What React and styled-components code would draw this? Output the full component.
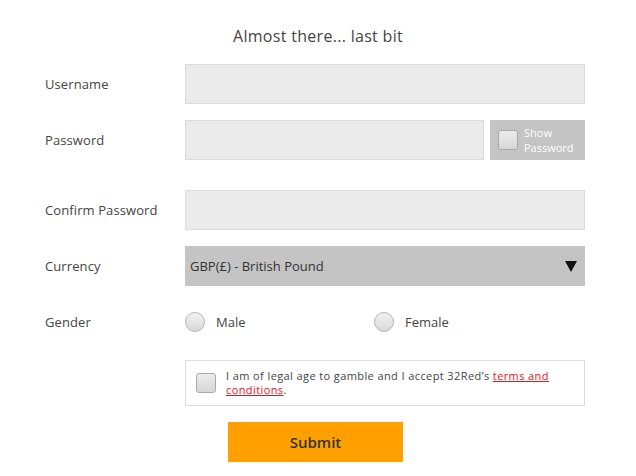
import React from "react";
import styled, { createGlobalStyle } from "styled-components";

const fields = [
  { label: "Username", type: "text", space: 16 },
  { label: "Password", type: "password", space: 30, toggle: true },
  { label: "Confirm Password", type: "password", space: 16 },
];

export default function App() {
  return (
    <Page>
      <GlobalStyle />
      <Title>Almost there... last bit</Title>
      <Form>
        {fields.map((f) => (
          <Row key={f.label} $space={f.space}>
            <Label>{f.label}</Label>
            <Field>
              <TextInput type={f.type} />
              {f.toggle && (
                <ShowToggle>
                  <Box />
                  <ToggleText>Show<br />Password</ToggleText>
                </ShowToggle>
              )}
            </Field>
          </Row>
        ))}
        <Row $space={16}>
          <Label>Currency</Label>
          <Select>
            <span>GBP(£) - British Pound</span>
            <Caret />
          </Select>
        </Row>
        <Row $space={18}>
          <Label>Gender</Label>
          <Radios>
            <RadioOption>
              <Radio />
              Male
            </RadioOption>
            <RadioOption>
              <Radio />
              Female
            </RadioOption>
          </Radios>
        </Row>
        <Row $space={16} $auto>
          <span />
          <Terms>
            <Box />
            <TermsText>
              I am of legal age to gamble and I accept 32Red’s{" "}
              <TermsLink href="#">terms and conditions</TermsLink>.
            </TermsText>
          </Terms>
        </Row>
        <Submit>Submit</Submit>
      </Form>
    </Page>
  );
}

// -------------- STYLES

const GlobalStyle = createGlobalStyle`
  body {
    margin: 0;
    background: #fff;
    font-family: "Open Sans", "Lato", sans-serif;
    color: #444;
  }
`;

const Page = styled.div`
  width: 636px;
  padding-top: 26px;
`;

const Title = styled.h1`
  margin: 0 0 17px;
  text-align: center;
  font-size: 16px;
  font-weight: 400;
  line-height: 21px;
  letter-spacing: 0.3px;
  color: #444;
`;

const Form = styled.div`
  display: flex;
  flex-direction: column;
  padding-left: 45px;
`;

const Row = styled.div`
  display: grid;
  grid-template-columns: 140px 400px;
  align-items: center;
  height: ${(p) => (p.$auto ? "auto" : "40px")};
  margin-bottom: ${(p) => p.$space}px;
`;

const Label = styled.label`
  font-size: 13px;
  letter-spacing: 0.1px;
  color: #444;
`;

const Field = styled.div`
  display: flex;
  gap: 6px;
  height: 40px;
`;

const TextInput = styled.input`
  flex: 1;
  min-width: 0;
  box-sizing: border-box;
  height: 40px;
  margin: 0;
  background: #ebebeb;
  border: 1px solid #dcdcdc;
  outline: none;
`;

const ShowToggle = styled.div`
  display: flex;
  align-items: center;
  gap: 6px;
  width: 95px;
  box-sizing: border-box;
  padding-left: 8px;
  background: #c4c4c4;
`;

const Box = styled.span`
  flex: none;
  width: 20px;
  height: 20px;
  box-sizing: border-box;
  border: 1px solid #a9a9a9;
  border-radius: 3px;
  background: linear-gradient(#ebebeb, #d7d7d7);
`;

const ToggleText = styled.span`
  font-size: 11px;
  line-height: 15px;
  color: #fff;
`;

const Select = styled.div`
  display: flex;
  align-items: center;
  justify-content: space-between;
  height: 40px;
  padding: 0 8px 0 5px;
  background: #c4c4c4;
  font-size: 13px;
  color: #333;
`;

const Caret = styled.span`
  width: 0;
  height: 0;
  border-left: 6px solid transparent;
  border-right: 6px solid transparent;
  border-top: 11px solid #111;
`;

const Radios = styled.div`
  display: grid;
  grid-template-columns: 189px 1fr;
`;

const RadioOption = styled.label`
  display: flex;
  align-items: center;
  gap: 11px;
  font-size: 13px;
  color: #444;
`;

const Radio = styled.span`
  width: 20px;
  height: 20px;
  box-sizing: border-box;
  border: 1px solid #b5b5b5;
  border-radius: 50%;
  background: linear-gradient(#f2f2f2, #d8d8d8);
`;

const Terms = styled.div`
  display: flex;
  align-items: center;
  gap: 10px;
  height: 46px;
  box-sizing: border-box;
  padding: 0 30px 0 10px;
  border: 1px solid #dcdcdc;
`;

const TermsText = styled.p`
  margin: 0;
  font-size: 11px;
  line-height: 14px;
  letter-spacing: 0.4px;
  color: #444;
`;

const TermsLink = styled.a`
  color: #e8141b;
`;

const Submit = styled.button`
  align-self: flex-start;
  width: 175px;
  height: 40px;
  margin-left: 183px;
  border: none;
  background: #ffa000;
  font-family: "Open Sans", sans-serif;
  font-size: 15px;
  font-weight: 600;
  color: #333;
  cursor: pointer;
`;
